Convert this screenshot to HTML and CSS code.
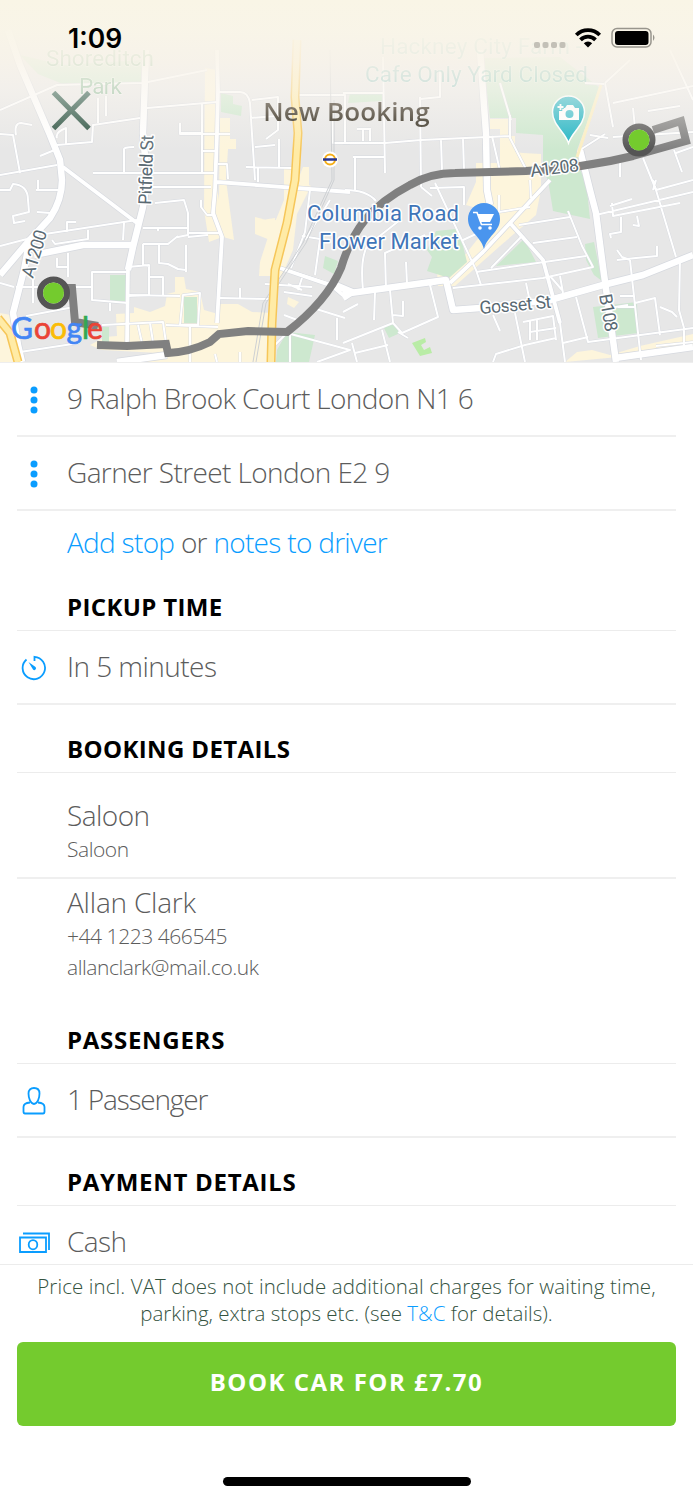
FILE: index.html
```html
<!DOCTYPE html>
<html lang="en">
<head>
  <meta charset="UTF-8" />
  <meta name="viewport" content="width=device-width, initial-scale=1" />
  <title>New Booking</title>
  <link rel="stylesheet" href="styles.css">
</head>
<body>

  <header class="map">
    <svg class="map-canvas" width="693" height="362" viewBox="0 0 693 362">
      <defs>
        <linearGradient id="fade" x1="0" y1="0" x2="0" y2="1">
          <stop offset="0" stop-color="#f9f5e6" />
          <stop offset=".2" stop-color="#f9f5e8" stop-opacity=".97" />
          <stop offset=".4" stop-color="#f9f4ea" stop-opacity=".86" />
          <stop offset=".6" stop-color="#f9f5ee" stop-opacity=".62" />
          <stop offset=".8" stop-color="#f9f5ee" stop-opacity=".3" />
          <stop offset="1" stop-color="#f9f5ee" stop-opacity="0" />
        </linearGradient>

        <g id="minor">
          <path d="M0 110L57 85L143 83L207 70M0 134L13 135L20 173M16 135Q14 123 21 123L32 125M57 145L92 142L93 125L140 118M66 145V128Q55 132 57 138M98 123V98M106 116V96M40 156L57 149" />
          <path d="M0 175L57 165M63 167L137 223M93 173H217M124 173V150Q123 147 134 147M147 108L217 102M202 103V172M202 151H217M180 123V134H218L230 134M180 133H202" />
          <path d="M218 92H240Q248 92 250 103L255 180M250 118L277 116M252 100L278 97V130L266 139M255 147L275 145M279 139V167M246 167L292 168M258 168V182M218 164H227L228 179" />
          <path d="M217 182L350 192M333 110V143H350M297 95H345V142M310 190L305 232L291 268M302 236L320 239L315 275M280 268L350 290M330 200L305 240" />
          <path d="M0 190L10 190L13 184Q28 185 28 200L29 212L13 216L14 223L25 221M36 190H58M38 180V190M37 212L50 213M0 246L27 239M45 234L137 220M52 240L55 244L88 239V230M67 232V222L76 222M124 223L123 240" />
          <path d="M143 228H188M158 231V228M155 203L184 200L188 213V235L178 237M188 233H220M188 237L208 235M143 244H168L178 236M143 244V265L150 266M159 243V263L168 264L178 269L186 270M186 245V272M128 267L149 265V295L128 296M150 277H163V296M201 200V207L207 215H215M149 187H211" />
          <path d="M90 287H92V272H128M92 287V300L128 303M16 287H90M0 283L14 287M68 253V277M57 258V267H68M33 278V303M110 303V311M26 316L74 307M102 325L163 322L166 343M20 352L79 343M138 325L142 343M150 323L153 342M128 295L180 296" />
          <path d="M183 295L200 293L198 325H180ZM166 325L218 327M220 298L270 299M240 288V299M265 284L312 287M288 284L302 290M284 292L312 296M302 278L298 290M190 325V362M240 352V362M215 354L217 362" />
          <path d="M383 57L385 173M343 143H385L421 140L510 136M420 97L421 187M441 140L442 170M463 139L464 170M355 157V190M353 157H385M357 129H371M363 129V141M370 129V141M420 99L440 97V70M343 93H383M510 115V138L527 171M492 136L500 171" />
          <path d="M435 183L476 270L481 285M421 187L432 196M430 188L464 187V205M345 190Q367 190 376 201M363 290Q360 260 367 246L400 220M386 290L385 253L425 235M407 284L406 262M463 240L476 234M488 180L490 220M530 180L531 198M499 195V212L530 207" />
          <path d="M510 223L543 260L560 323L565 362M453 288L543 278L593 267L582 246L568 211M476 272L586 256M519 225L570 217M533 243L577 237M491 268L521 237M550 276L562 290M560 276L563 293M526 283L530 302M515 313L525 362M493 315L500 331" />
          <path d="M343 343L393 323L390 290M393 323L402 333L438 317L430 285L446 280M375 292L374 320M403 301V316L393 315M343 312L358 304M382 330L390 362M352 343L357 362M355 353L388 345M398 332L408 338M523 322L553 316L556 340M530 320V340M537 319V340M530 332L556 328M493 362L496 354L525 345L556 338" />
          <path d="M576 297L588 342L693 328M563 343L588 337M630 260L641 360M653 180L676 257M656 180L653 190M596 215L693 192M618 307H635M635 303L655 298L660 335M660 307L672 312L677 317M620 296H633M603 309L628 305M656 346L693 342M680 258L679 310L684 328V348M612 203L613 216L680 203M610 206L632 199M637 216L639 226L633 225M621 217V232L610 234L611 238M617 250L622 257L630 260M617 260L636 258L657 256V246" />
          <path d="M605 83L613 127M613 103L693 86M633 108L635 128M648 111L680 106M605 83L630 60M670 50L693 100M643 158L656 190M674 150L682 172M656 190L693 180M580 150L605 134M613 137L693 132M590 135L608 138M620 158V177M585 83L604 84M676 153L693 147M500 83L511 120" />
          <path d="M273 347L287 333L350 350L317 362M290 332V362M313 308L345 318M337 318V340M284 315L300 321" />
        </g>
        <g id="major">
          <path d="M8 30L20 65L50 135L60 160L62 180Q62 200 50 218L27 243L0 275M30 238L24 270L13 313L18 345L22 362M34 255L83 245H135" />
          <path d="M146 50L143 133L147 180L143 207L133 247L128 270" />
          <path d="M117 362L167 355M333 284L352 292L343 298" />
          <path d="M480 50L486 133L487 190L490 205M580 150L590 190L596 213L603 267L616 362" />
          <path d="M343 294L446 280L453 310L480 308L550 300L603 285L643 275L693 255M615 358L693 347" />
        </g>
        <g id="medium">
          <path d="M217 50L218 90L217 133L215 190L213 213L222 237L217 323M217 182L350 192M137 223L63 167M280 268L350 292M128 268L127 343" />
          <path d="M450 283L483 252L510 223L550 180M510 223L543 260L560 323M343 295L330 284" />
        </g>
      </defs>

      <rect class="land" width="693" height="362" />

      <!-- commercial areas -->
      <g class="zone">
        <path d="M205 68L217 70L216 182L225 236L209 242L204 210ZM220 118H230V139H236V149H228L226 180L234 240L223 237L219 200Z" />
        <path d="M284 167H293V222L280 276H259L260 262L267 240L270 233L275 229V218L255 221V220L255 217L275 222L284 200ZM303 167H309V185L311 186L297 214L293 250L280 280L275 265L289 220L298 180Z" />
        <path d="M116 314L134 313V307L150 312L165 306L167 294L175 292V277H184L186 289L200 292L204 310L218 314V304H238L252 312L272 313L270 362H125L160 353L102 350L90 345L105 337L117 336Z" />
        <path d="M255 220H275L290 222L284 245L270 240L255 234Z" />
        <path d="M0 313L11 315L16 345L20 362H0Z" />
        <path d="M490 119H508V136L515 136V152L523 153L541 154V190L536 215L500 246L455 286H438L437 272L445 274L465 255L480 236L500 215L466 205L476 182V163H500V129H490Z" />
        <path d="M565 362L577 352L592 350L610 355L640 346L693 334V350Z" />
        <path d="M288 297L299 302L294 308L287 304Z" />
      </g>
      <!-- parks -->
      <g class="park">
        <path d="M20 55L63 65L143 60V83L63 84L38 74Z" />
        <path d="M221 93L233 96V104L242 106L241 116L221 112Z" />
        <path d="M483 58L560 57L600 88L577 150L580 170L586 181L590 219L553 211L548 180L543 171L543 135L516 133V118H490Z" />
        <path d="M350 93H382V101L348 103Z" />
        <path d="M110 275H127V301H110ZM184 297H197V323H184ZM325 256L338 261L334 274L323 268ZM102 327H109V343H102Z" />
        <path d="M277 350L287 332L315 335L309 362H276Z" />
        <path d="M436 231L456 229L463 246L467 262L449 278L427 271L432 257L427 250Z" />
        <path d="M496 266L524 239L536 262ZM585 244L594 242L602 281L594 275L586 260ZM593 307L637 302L638 333L598 338ZM384 328L394 323L400 333L389 338Z" />
      </g>
      <path class="garden" d="M412 343L425 338L426 342L421 345L424 350L430 347L432 353L420 356Z" />

      <use class="casing casing-minor" href="#minor" />
      <use class="casing casing-medium" href="#medium" />
      <use class="casing casing-major" href="#major" />
      <use class="road road-minor" href="#minor" />
      <use class="road road-medium" href="#medium" />
      <use class="road road-major" href="#major" />

      <path class="rail" d="M330 50L332 180L303 243L263 303L253 362M334 100L334 180L306 243L266 303L256 362" />
      <path class="trunk-edge" d="M297 40L295 97L298 133L295 180L287 223L275 270L272 323L271 362M-2 318L10 333L18 362" />
      <path class="trunk" d="M297 40L295 97L298 133L295 180L287 223L275 270L272 323L271 362M-2 318L10 333L18 362" />
      <path class="lane" d="M601 85L577 157" />

      <!-- route -->
      <path class="route" d="M60 288H72L75 322L98 326M97 345L127 346L166 344L168 353Q190 352 210 342L219 334L248 331L287 332Q327 301 341 268C353 228 372 205 410 185Q430 173 455 173L526 171Q585 168 633 156L686 141L681 121L653 130" />
      <circle class="stop-ring" cx="53.500" cy="293" r="13.500" />
      <circle class="stop-ring" cx="639" cy="140" r="13.500" />

      <!-- station -->
      <circle cx="330" cy="159.500" r="8" fill="#fff" />
      <circle cx="330" cy="159.500" r="5" fill="#fff" stroke="#f5ae18" stroke-width="2" />
      <path d="M323 159.500H337" stroke="#29348e" stroke-width="2.500" />

      <!-- place pins -->
      <path d="M568.500 143C565 132 552.500 125 552.500 112A16 16 0 0 1 584.500 112C584.500 125 572 132 568.500 143Z" fill="#1fb4c4" stroke="#fff" stroke-width="1.500" />
      <path d="M559 108H565L567 105H573L575 108H579V120H559Z" fill="#fff" />
      <path d="M560.500 103.500V111M557 107H564" stroke="#1fb4c4" stroke-width="3.500" />
      <path d="M560.500 104V110M557.500 107H563.500" stroke="#fff" stroke-width="1.800" />
      <circle cx="569.500" cy="114" r="4" fill="#35bccb" />
      <path d="M484 249C481 236 468 232 468 219A16 16 0 0 1 500 219C500 232 487 236 484 249Z" fill="#4a95ee" />
      <path d="M473 212.500H477L481.500 224.500H492" fill="none" stroke="#fff" stroke-width="1.600" />
      <path d="M477.500 214H494L490 222H480.500Z" fill="#fff" />
      <circle cx="480" cy="228" r="1.800" fill="#fff" />
      <circle cx="490" cy="228" r="1.800" fill="#fff" />

      <!-- labels -->
      <g class="label">
        <text class="park-name" x="46" y="66" textLength="108">Shoreditch</text>
        <text class="park-name" x="79" y="94" textLength="43">Park</text>
        <text class="sight" x="380" y="54" textLength="202">Hackney City Farm -</text>
        <text class="sight" x="365" y="82" textLength="223">Cafe Only Yard Closed</text>
        <text class="market" x="307" y="221" textLength="152">Columbia Road</text>
        <text class="market" x="319" y="249" textLength="140">Flower Market</text>
        <text class="street" transform="translate(151 205) rotate(-88)" textLength="70">Pitfield St</text>
        <text class="street" transform="translate(33 279) rotate(-73)" textLength="49">A1200</text>
        <text class="street" transform="translate(531 177) rotate(-7)" textLength="49">A1208</text>
        <text class="street" transform="translate(480 314) rotate(-5)" textLength="72">Gosset St</text>
        <text class="street" transform="translate(599 295) rotate(80)" textLength="38">B108</text>
      </g>

      <rect width="693" height="150" fill="url(#fade)" />
      <circle cx="53.500" cy="293" r="10.500" fill="#74cb2e" />
      <circle cx="639" cy="140" r="10.500" fill="#74cb2e" />

      <text class="google" y="339"><tspan x="11" class="g-blue">G</tspan><tspan x="34" class="g-red">o</tspan><tspan x="50" class="g-yellow">o</tspan><tspan x="66.500" class="g-blue">g</tspan><tspan x="82" class="g-green">l</tspan><tspan x="87" class="g-red">e</tspan></text>
    </svg>

    <div class="overlay">
      <div class="status-bar">
        <span class="time">1:09</span>
        <svg class="status-icons" width="124" height="24" viewBox="0 0 124 24">
          <g fill="#c3c0b7">
            <rect x="1" y="15" width="6" height="6" rx="2" /><rect x="9.500" y="15" width="6" height="6" rx="2" />
            <rect x="18" y="15" width="6" height="6" rx="2" /><rect x="26.500" y="15" width="6" height="6" rx="2" />
          </g>
          <g fill="none" stroke="#000" stroke-width="3.800">
            <path d="M43.300 8A16.600 16.600 0 0 1 66.700 8" />
            <path d="M47.500 12.800A10.600 10.600 0 0 1 62.500 12.800" />
          </g>
          <path d="M50.800 16.200A6 6 0 0 1 59.200 16.200L55 20.500Z" />
          <rect x="79" y="1.500" width="39" height="18.500" rx="5" fill="none" stroke="#98958d" stroke-width="1.500" />
          <rect x="82" y="4" width="33.500" height="14" rx="3" />
          <path d="M120 7.500Q123 10.500 120 14Z" fill="#98958d" />
        </svg>
      </div>
      <div class="title-bar">
        <svg class="close" width="40" height="40" viewBox="0 0 40 40">
          <defs>
            <linearGradient id="closeFade" gradientUnits="userSpaceOnUse" x1="0" y1="0" x2="0" y2="40">
              <stop offset="0" stop-color="#94a99e" />
              <stop offset="1" stop-color="#4c6b5c" />
            </linearGradient>
          </defs>
          <path d="M2.500 1.500L38 37.500M38 1.500L2.500 37.500" stroke="url(#closeFade)" stroke-width="5" />
        </svg>
        <h1>New Booking</h1>
      </div>
    </div>
  </header>

  <main class="booking">
    <div class="row">
      <span class="icon"><svg width="8" height="28" viewBox="0 0 8 28"><circle cx="4" cy="4" r="3.500" /><circle cx="4" cy="14" r="3.500" /><circle cx="4" cy="24" r="3.500" /></svg></span>
      <span class="address">9 Ralph Brook Court London N1 6</span>
    </div>
    <div class="row">
      <span class="icon"><svg width="8" height="28" viewBox="0 0 8 28"><circle cx="4" cy="4" r="3.500" /><circle cx="4" cy="14" r="3.500" /><circle cx="4" cy="24" r="3.500" /></svg></span>
      <span class="address">Garner Street London E2 9</span>
    </div>
    <p class="extras"><a href="#">Add stop</a> or <a href="#">notes to driver</a></p>

    <h2 class="first">Pickup time</h2>
    <div class="row">
      <span class="icon">
        <svg class="line" width="26" height="26" viewBox="0 0 26 26"><path d="M5.500 4.500A11.200 11.200 0 1 0 13.500 1.800V6" /><path class="hand" d="M7.500 7L14.500 12A1.700 1.700 0 0 1 12 14.500Z" /></svg>
      </span>
      <span>In 5 minutes</span>
    </div>

    <h2>Booking details</h2>
    <div class="vehicle">
      <p>Saloon</p>
      <p class="small">Saloon</p>
    </div>
    <div class="contact">
      <p class="name">Allan Clark</p>
      <p class="small">+44 1223 466545</p>
      <p class="small">allanclark@mail.co.uk</p>
    </div>

    <h2 class="wide">Passengers</h2>
    <div class="row">
      <span class="icon">
        <svg class="line" width="24" height="28" viewBox="0 0 24 28"><path d="M12 1C15.500 1 17.500 3 17.500 6.500C17.500 11 15.500 17 12 17C8.500 17 6.500 11 6.500 6.500C6.500 3 8.500 1 12 1Z" /><path d="M8 15.500Q1.500 16 1.500 20V24.500Q1.500 26.500 3 26.500H21Q22.500 26.500 22.500 24.500V20Q22.500 16 16 15.500" /></svg>
      </span>
      <span class="passenger">1 Passenger</span>
    </div>

    <h2 class="wide">Payment details</h2>
    <div class="row last">
      <span class="icon">
        <svg class="line" width="32" height="22" viewBox="0 0 32 22"><path d="M2 5.500H28V20H2ZM5 1.500H31V18" /><ellipse cx="15" cy="12.700" rx="4.300" ry="4.600" /></svg>
      </span>
      <span>Cash</span>
    </div>
  </main>

  <footer>
    <p class="notice"><span class="charges">Price incl. VAT does not include additional charges for waiting time,</span><br>parking, extra stops etc. (see <a href="#">T&amp;C</a> for details).</p>
    <button class="book">BOOK CAR FOR £7.70</button>
    <div class="home-bar"></div>
  </footer>

</body>
</html>
```
FILE: styles.css
```css
* {
  box-sizing: border-box;
}
body {
  margin: 0;
  width: 693px;
  height: 1500px;
  display: flex;
  flex-direction: column;
  overflow: hidden;
  background: #fff;
  color: #5c5c5c;
  font-family: "Open Sans", "Noto Sans", sans-serif;
  font-weight: 300;
  font-size: 28px;
}
p, h1, h2 {
  margin: 0;
}
a {
  color: #0a9dff;
  text-decoration: none;
}

/* map */
.map {
  position: relative;
  height: 363px;
  border-bottom: 1px solid #eee;
}
.map-canvas {
  display: block;
}
.land {
  fill: #e7e7e7;
}
.zone {
  fill: #fdf5dc;
}
.park {
  fill: #cde8cf;
}
.garden {
  fill: #b9eca6;
}
.road, .casing, .rail, .trunk, .trunk-edge, .lane, .route {
  fill: none;
  stroke-linejoin: round;
}
.casing {
  stroke: #d6d9df;
}
.road {
  stroke: #fff;
}
.casing-minor { stroke-width: 2.8px; }
.casing-medium { stroke-width: 5px; }
.casing-major { stroke-width: 8px; }
.road-minor { stroke-width: 2px; }
.road-medium { stroke-width: 3.8px; }
.road-major { stroke-width: 6.5px; }
.rail {
  stroke: #cdd0d3;
  stroke-width: 1px;
}
.trunk-edge {
  stroke: #f6c659;
  stroke-width: 9px;
}
.trunk {
  stroke: #ffeba6;
  stroke-width: 6px;
}
.lane {
  stroke: #fbeec2;
  stroke-width: 3px;
}
.route {
  stroke: #808080;
  stroke-width: 8px;
  stroke-linejoin: miter;
}
.stop-ring {
  fill: none;
  stroke: #555;
  stroke-width: 6px;
}
.label text {
  font-family: Roboto, sans-serif;
  font-weight: 400;
  paint-order: stroke;
  stroke: #fff;
  stroke-width: 3px;
  stroke-linejoin: round;
}
.label .park-name {
  font-size: 22.5px;
  fill: #5fa373;
  stroke-width: 1px;
  opacity: .75;
}
.label .sight {
  font-size: 22.5px;
  fill: #2f9c96;
  stroke-width: 1px;
  opacity: .5;
}
.label .market {
  font-size: 22px;
  fill: #3f75b8;
}
.label .street {
  font-size: 18px;
  fill: #5a6a73;
}
.google {
  font-family: Lato, sans-serif;
  font-size: 30px;
  font-weight: 400;
  stroke-width: .7px;
}
.g-blue { fill: #4285f4; stroke: #4285f4; }
.g-red { fill: #ea4335; stroke: #ea4335; }
.g-yellow { fill: #fbbc05; stroke: #fbbc05; }
.g-green { fill: #34a853; stroke: #34a853; }

.overlay {
  position: absolute;
  inset: 0 0 auto;
}
.status-bar {
  display: flex;
  justify-content: space-between;
  align-items: flex-start;
  height: 52px;
  padding: 27px 36px 0 68px;
}
.time {
  font-family: Inter, sans-serif;
  font-size: 26.5px;
  font-weight: 600;
  line-height: 22px;
  color: #000;
}
.title-bar {
  display: grid;
  grid-template-columns: 1fr auto 1fr;
  align-items: center;
  height: 118px;
  padding: 0 51px;
}
h1 {
  font-size: 26px;
  font-weight: 600;
  letter-spacing: .1px;
  color: transparent;
  background: linear-gradient(#8d857a 25%, #5d574b 80%);
  background-clip: text;
}

/* booking form */
.booking {
  height: 901px;
  padding: 0 17px;
  overflow: hidden;
  letter-spacing: -.55px;
}
.row {
  display: flex;
  height: 74px;
  padding-bottom: 3px;
  align-items: center;
  border-bottom: 2px solid #efefef;
}
.row.last {
  padding-bottom: 5px;
  border: 0;
}
.address {
  letter-spacing: -.61px;
}
.passenger {
  letter-spacing: -1.2px;
}
.name {
  letter-spacing: -.2px;
}
.icon {
  display: flex;
  width: 50px;
  margin-top: 5px;
  padding-right: 17px;
  justify-content: center;
  flex: none;
}
.icon svg {
  fill: #0a9dff;
}
.icon .line {
  fill: none;
  stroke: #0a9dff;
  stroke-width: 1.8px;
}
.icon .hand {
  fill: #0a9dff;
  stroke: none;
}
.extras {
  height: 66px;
  padding-left: 50px;
  line-height: 63px;
  letter-spacing: -.7px;
}
h2 {
  height: 68px;
  padding: 24px 0 0 50px;
  border-bottom: 1.5px solid #ececec;
  font-size: 24px;
  font-weight: 700;
  line-height: 40px;
  letter-spacing: .37px;
  text-transform: uppercase;
  color: #000;
}
h2.first {
  height: 54px;
  padding-top: 10px;
}
h2.wide {
  letter-spacing: .72px;
}
.vehicle, .contact {
  padding-left: 50px;
  line-height: 38px;
}
.vehicle {
  height: 106px;
  padding-top: 23px;
  border-bottom: 2px solid #efefef;
}
.contact {
  height: 117px;
  padding-top: 4px;
}
.small {
  font-size: 21px;
  line-height: 31px;
  letter-spacing: -.45px;
}

/* footer */
footer {
  display: flex;
  flex-direction: column;
  flex: 1;
  padding: 8px 17px 14px;
  border-top: 1.5px solid #ececec;
}
.notice {
  font-size: 20.5px;
  line-height: 27px;
  text-align: center;
  white-space: nowrap;
  color: #34533f;
}
.charges {
  letter-spacing: .1px;
}
.book {
  height: 84px;
  margin-top: 15px;
  padding: 0 0 6px;
  border: 0;
  border-radius: 6px;
  background: #74cb2e;
  color: #fff;
  font-family: inherit;
  font-size: 24px;
  font-weight: 700;
  letter-spacing: 1.5px;
}
.home-bar {
  width: 248px;
  height: 9px;
  margin: auto auto 0;
  border-radius: 5px;
  background: #000;
}
```
